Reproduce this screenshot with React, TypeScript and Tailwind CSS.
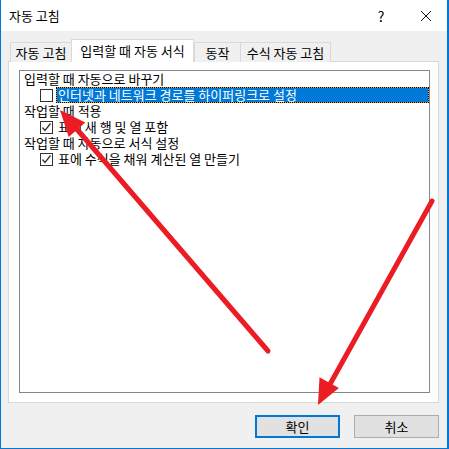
import React from 'react';

const font = { fontFamily: '"Noto Sans CJK KR", "Noto Sans", sans-serif' };

function Checkbox({ checked }: { checked?: boolean }) {
  return (
    <span className="w-[13px] h-[13px] border border-[#333333] bg-white flex items-center justify-center shrink-0">
      {checked && (
        <svg width="11" height="11" viewBox="0 0 11 11">
          <path d="M1.5 5.5 L4 8.5 L9.5 1.5" fill="none" stroke="#333333" strokeWidth="1.3" />
        </svg>
      )}
    </span>
  );
}

function Header({ text }: { text: string }) {
  return <div className="h-[16px] pl-[4px] leading-[16px]">{text}</div>;
}

function Option({ text, checked, selected }: { text: string; checked?: boolean; selected?: boolean }) {
  return (
    <div className="h-[16px] pl-[20px] flex items-center">
      <Checkbox checked={checked} />
      {selected ? (
        <div className="ml-[3px] flex-1 h-[16px] border border-dotted border-black bg-[#e8a040]">
          <div className="h-full bg-[#0078d7] text-white pl-[1px] leading-[14px]">{text}</div>
        </div>
      ) : (
        <span className="ml-[5px] leading-[16px]">{text}</span>
      )}
    </div>
  );
}

export default function App() {
  const tabs = [
    { label: '자동 고침', w: 'w-[62px]' },
    { label: '입력할 때 자동 서식', w: 'w-[123px]', active: true },
    { label: '동작', w: 'w-[47px]' },
    { label: '수식 자동 고침', w: 'w-[91px]' },
  ];

  return (
    <div className="relative w-[449px] h-[449px] bg-[#f0f0f0] border-l border-r-2 border-b border-[#0078d7] text-[13px] text-black overflow-hidden" style={font}>
      {/* title bar */}
      <div className="h-[31px] bg-white flex items-center pl-[8px]">
        <span className="flex-1 leading-none">자동 고침</span>
        <span className="w-[16px] text-center text-[14px] leading-none mr-[31px]">?</span>
        <svg width="12" height="12" viewBox="0 0 12 12" className="mr-[15px]">
          <path d="M1 1 L11 11 M11 1 L1 11" stroke="#111111" strokeWidth="1" />
        </svg>
      </div>

      <div className="pl-[7px] pr-[8px] pt-[8px]">
        {/* tabs */}
        <div className="flex items-end h-[23px] pl-[2px] -mb-px relative z-10">
          {tabs.map((t) =>
            t.active ? (
              <div key={t.label} className={`${t.w} h-[23px] bg-white border border-b-0 border-[#d9d9d9] flex items-center justify-center leading-none pb-[2px]`}>
                {t.label}
              </div>
            ) : (
              <div key={t.label} className={`${t.w} h-[20px] bg-[#f0f0f0] border border-b-0 border-[#d9d9d9] -mr-px flex items-center justify-center leading-none`}>
                {t.label}
              </div>
            )
          )}
        </div>

        {/* panel */}
        <div className="h-[342px] bg-white border border-[#d9d9d9] pl-[10px] pr-[8px] pt-[8px] pb-[9px]">
          <div className="h-full border border-[#828790] bg-white">
            <Header text="입력할 때 자동으로 바꾸기" />
            <Option text="인터넷과 네트워크 경로를 하이퍼링크로 설정" selected />
            <Header text="작업할 때 적용" />
            <Option text="표에 새 행 및 열 포함" checked />
            <Header text="작업할 때 자동으로 서식 설정" />
            <Option text="표에 수식을 채워 계산된 열 만들기" checked />
          </div>
        </div>

        {/* buttons */}
        <div className="flex justify-end gap-[14px] mt-[12px]">
          <button className="w-[85px] h-[23px] bg-[#e1e1e1] border-2 border-[#0078d7] leading-none">확인</button>
          <button className="w-[85px] h-[23px] bg-[#e1e1e1] border border-[#adadad] leading-none">취소</button>
        </div>
      </div>

      {/* red annotation arrows */}
      <svg className="absolute left-0 top-0 pointer-events-none" width="449" height="449" viewBox="0 0 449 449">
        <line x1="267" y1="351" x2="74" y2="127" stroke="#ec1c24" strokeWidth="5" strokeLinecap="round" />
        <polygon points="59,110 67.7,136.9 84.3,122.5" fill="#ec1c24" />
        <line x1="431" y1="201" x2="328" y2="386" stroke="#ec1c24" strokeWidth="5" strokeLinecap="round" />
        <polygon points="317,405 337.9,388.1 318.5,377.3" fill="#ec1c24" />
      </svg>
    </div>
  );
}
